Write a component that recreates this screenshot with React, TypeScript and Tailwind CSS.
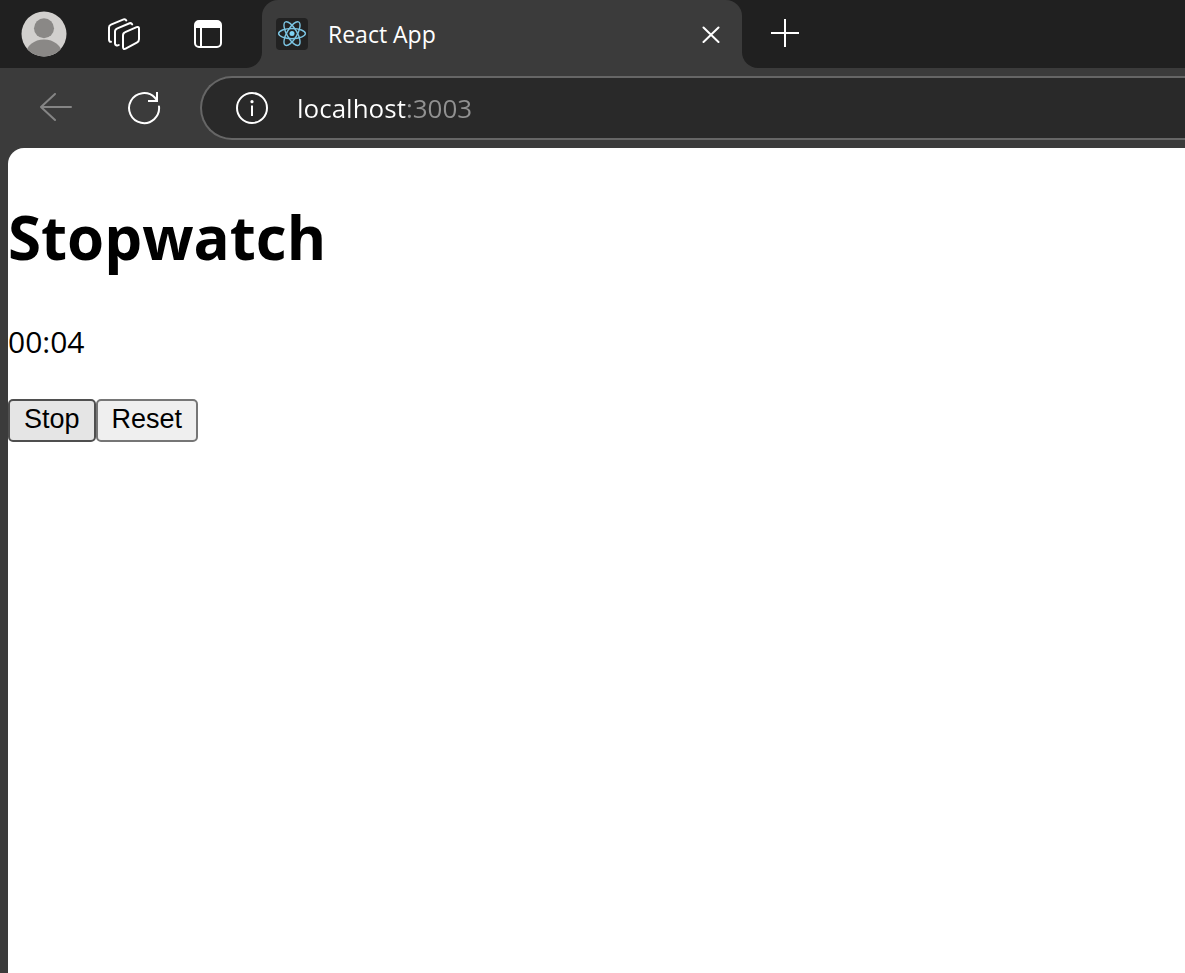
import { useEffect, useState } from "react";

function ProfileIcon() {
  return (
    <svg width="46" height="46" viewBox="0 0 46 46" aria-hidden="true">
      <defs>
        <clipPath id="avatar">
          <circle cx="23" cy="23" r="22.5" />
        </clipPath>
      </defs>
      <circle cx="23" cy="23" r="22.5" fill="#d2d0ce" />
      <g clipPath="url(#avatar)" fill="#8a8886">
        <circle cx="23" cy="17.3" r="10" />
        <ellipse cx="23" cy="43" rx="18" ry="14.5" />
      </g>
    </svg>
  );
}

function WorkspacesIcon() {
  return (
    <svg width="36" height="36" viewBox="0 0 36 36" fill="none" stroke="#fff" strokeWidth="2" strokeLinecap="round" strokeLinejoin="round" aria-hidden="true">
      <path d="M20.3 4.4C19.6 3.2 18.6 3 17.6 3.4L5 8.7C3.6 9.3 3 10.2 3 11.6V23.6C3 25 3.8 26 5 25.8" />
      <path d="M26.2 8.4C25.6 7.2 24.6 6.9 23.6 7.3L11.4 12.4C9.9 13 9 14 9 15.6V27.4C9 29.2 10.9 30.1 12.8 29" />
      <path d="M19.2 16.1L30.6 11.1C32.2 10.5 33 11.2 33 12.8V23.2C33 24.8 32.3 25.8 30.8 26.6L19.6 32.7C18 33.5 17 32.7 17 31.1V19.4C17 17.8 17.7 16.7 19.2 16.1Z" />
    </svg>
  );
}

function TabActionsIcon() {
  return (
    <svg width="28" height="28" viewBox="0 0 28 28" aria-hidden="true">
      <rect x="1" y="1" width="26" height="26" rx="4" fill="none" stroke="#fff" strokeWidth="2" />
      <path d="M1 8V5a4 4 0 0 1 4-4h18a4 4 0 0 1 4 4v3z" fill="#fff" />
      <path d="M7 8v18" stroke="#fff" strokeWidth="2" />
    </svg>
  );
}

function ReactLogo() {
  return (
    <svg width="32" height="32" viewBox="0 0 32 32" className="shrink-0" aria-hidden="true">
      <rect width="32" height="32" rx="4" fill="#222" />
      <g fill="none" stroke="#7cc5e3" strokeWidth="1.4">
        <ellipse cx="16" cy="15.6" rx="13.4" ry="5.1" />
        <ellipse cx="16" cy="15.6" rx="13.4" ry="5.1" transform="rotate(60 16 15.6)" />
        <ellipse cx="16" cy="15.6" rx="13.4" ry="5.1" transform="rotate(120 16 15.6)" />
      </g>
      <circle cx="16" cy="15.6" r="2.5" fill="#7fd3f3" />
    </svg>
  );
}

function TabStrip() {
  return (
    <header className="flex h-[68px] bg-[#3b3b3b]">
      <div className="flex w-[262px] shrink-0 items-center rounded-br-2xl bg-[#202020] pl-[21px]">
        <button type="button" aria-label="Profile">
          <ProfileIcon />
        </button>
        <button type="button" aria-label="Workspaces" className="ml-[39px]">
          <WorkspacesIcon />
        </button>
        <button type="button" aria-label="Tab actions menu" className="ml-[52px]">
          <TabActionsIcon />
        </button>
      </div>
      <div className="w-[480px] bg-[linear-gradient(#202020_50%,#3b3b3b_50%)]">
        <div className="flex h-full items-center rounded-t-2xl bg-[#3b3b3b] pr-[22px] pl-[14px]">
          <ReactLogo />
          <span className="ml-5 flex-1 font-['Open_Sans','Noto_Sans',sans-serif] text-[23px] leading-8 text-white">
            React App
          </span>
          <button type="button" aria-label="Close tab">
            <svg width="18" height="18" viewBox="0 0 18 18" stroke="#fff" strokeWidth="2" strokeLinecap="round" aria-hidden="true">
              <path d="M1.5 2.5L16.5 17M16.5 2.5L1.5 17" />
            </svg>
          </button>
        </div>
      </div>
      <div className="flex flex-1 items-center rounded-bl-2xl bg-[#202020] pl-[29px]">
        <button type="button" aria-label="New tab">
          <svg width="28" height="30" viewBox="0 0 28 30" stroke="#fff" strokeWidth="2" aria-hidden="true">
            <path d="M0 14H28M14 0V28" />
          </svg>
        </button>
      </div>
    </header>
  );
}

function Toolbar() {
  return (
    <nav className="flex h-20 items-center bg-[#3b3b3b] pl-[39px]">
      <button type="button" aria-label="Back">
        <svg width="34" height="30" viewBox="0 0 34 30" fill="none" stroke="#858585" strokeWidth="2" strokeLinecap="round" strokeLinejoin="round" aria-hidden="true">
          <path d="M32 14H2M16 1L2 14L16 27" />
        </svg>
      </button>
      <button type="button" aria-label="Refresh" className="ml-[54px]">
        <svg width="34" height="34" viewBox="0 0 34 34" fill="none" stroke="#fff" strokeWidth="2" aria-hidden="true">
          <path d="M32 15.5A15 15 0 1 1 28 6.8L30 9.5" strokeLinecap="round" />
          <path d="M30 1V10H21" />
        </svg>
      </button>
      <div className="ml-[39px] flex h-16 flex-1 items-center rounded-l-full border-2 border-r-0 border-[#666] bg-[#292929] pl-[33px]">
        <button type="button" aria-label="View site information">
          <svg width="34" height="34" viewBox="0 0 34 34" aria-hidden="true">
            <circle cx="17" cy="17" r="15" fill="none" stroke="#fff" strokeWidth="2" />
            <circle cx="17" cy="10.7" r="1.6" fill="#fff" />
            <path d="M17 14.5V25" stroke="#fff" strokeWidth="2" />
          </svg>
        </button>
        <input
          type="text"
          aria-label="Address"
          defaultValue="localhost:3003"
          className="ml-7 h-10 min-w-0 flex-1 bg-[linear-gradient(to_right,#fff_110px,#919191_110px)] bg-clip-text font-['Open_Sans','Noto_Sans',sans-serif] text-[26px] text-transparent caret-white outline-none"
        />
      </div>
    </nav>
  );
}

function Stopwatch() {
  const [seconds, setSeconds] = useState(4);
  const [running, setRunning] = useState(false);

  useEffect(() => {
    if (!running) return;
    const timer = setInterval(() => setSeconds((s) => s + 1), 1000);
    return () => clearInterval(timer);
  }, [running]);

  const minutesText = String(Math.floor(seconds / 60)).padStart(2, "0");
  const secondsText = String(seconds % 60).padStart(2, "0");

  return (
    <main className="flex-1 rounded-tl-2xl bg-white pt-12 font-['Open_Sans','Noto_Sans',sans-serif] text-black">
      <h1 className="text-[60px] leading-[82px] font-bold">Stopwatch</h1>
      <p className="mt-10 text-[30px] leading-[48px]">{minutesText + ":" + secondsText}</p>
      <div className="mt-[33px] flex font-['Liberation_Sans',Arial,sans-serif] text-[27px] leading-[37px]">
        <button
          type="button"
          onClick={() => setRunning((r) => !r)}
          className="rounded-[5px] border-2 border-[#4f4f4f] bg-[#e5e5e5] px-3.5 pb-0.5"
        >
          Stop
        </button>
        <button
          type="button"
          onClick={() => setSeconds(0)}
          className="rounded-[5px] border-2 border-[#767676] bg-[#efefef] px-3.5 pb-0.5"
        >
          Reset
        </button>
      </div>
    </main>
  );
}

export default function App() {
  return (
    <div className="flex min-h-screen flex-col bg-[#3b3b3b]">
      <TabStrip />
      <Toolbar />
      <div className="flex flex-1 pl-2">
        <Stopwatch />
      </div>
    </div>
  );
}
